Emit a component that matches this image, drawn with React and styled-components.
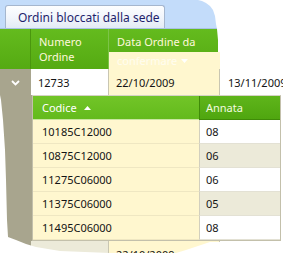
import React from "react";
import styled, { createGlobalStyle } from "styled-components";

const GlobalStyle = createGlobalStyle`
  html, body { margin: 0; padding: 0; background: #ffffff; }
  body { font-family: "Noto Sans", "Open Sans", sans-serif; }
`;

const Frame = styled.div`
  width: 297px;
  height: 264px;
  overflow: hidden;
  background: #ffffff;
`;

const Shot = styled.div`
  width: 297px;
  height: 264px;
  overflow: hidden;
  display: flex;
  flex-direction: column;
  background: #ffffff;
  clip-path: polygon(
    0px 0px, 198px 0px, 202px 1px, 206px 3px, 210px 6px, 213px 10px, 215px 16px,
    216px 24px, 217px 29px, 218px 40px, 218px 52px, 220px 52px, 220px 69px,
    283px 69px, 283px 95px, 282px 97px, 282px 192px, 287px 193px, 286px 216px,
    282px 217px, 282px 242px, 210px 242px, 198px 246px, 186px 250px, 176px 253px,
    110px 253px, 60px 251px, 36px 247px, 26px 244px, 16px 240px, 8px 237px,
    7px 220px, 6px 180px, 5px 150px, 3px 120px, 1px 100px, 0px 95px
  );
`;

const TabStrip = styled.div`
  height: 29px;
  flex: none;
  box-sizing: border-box;
  background: #c3dcfa;
  border-bottom: 1px solid #a8c2e3;
  padding: 5px 0 0 5px;
  display: flex;
  align-items: stretch;
`;

const Tab = styled.div`
  width: 160px;
  box-sizing: border-box;
  border: 1px solid #a5b6ce;
  border-bottom: none;
  border-radius: 3px 3px 0 0;
  background: linear-gradient(to bottom, #fdfeff 0%, #f1f5fb 55%, #e3ebf6 100%);
  padding-left: 12px;
  display: flex;
  align-items: center;
  font-size: 12px;
  color: #1e1f6c;
  white-space: nowrap;
`;

const HeaderRow = styled.div`
  height: 40px;
  flex: none;
  display: flex;
  background: linear-gradient(to bottom, #64bb1e, #55aa12);
`;

const HeadIndicator = styled.div`
  width: 31px;
  flex: none;
  box-sizing: border-box;
  border-right: 1px solid #4a960e;
`;

const HeadCell = styled.div`
  width: ${(p) => p.$w}px;
  flex: ${(p) => (p.$w ? "none" : "1")};
  box-sizing: border-box;
  padding: 5px 0 0 8px;
  font-size: 11px;
  line-height: 15px;
  color: #fff8dc;
  border-right: 1px solid #7cc448;
`;

const SortedHead = styled.div`
  width: 111px;
  flex: none;
  display: flex;
  flex-direction: column;
  font-size: 11px;
  color: #fff8dc;
  white-space: nowrap;
  overflow: hidden;
`;

const SortedTop = styled.div`
  height: 23px;
  box-sizing: border-box;
  padding: 5px 0 0 8px;
  line-height: 15px;
`;

const SortedBottom = styled.div`
  flex: 1;
  background: #fff7cf;
  color: #fffdf0;
  padding-left: 8px;
  line-height: 17px;
  display: flex;
  align-items: center;
  gap: 4px;
`;

const Row = styled.div`
  height: ${(p) => p.$h}px;
  flex: none;
  display: flex;
`;

const Indicator = styled.div`
  width: ${(p) => p.$w || 31}px;
  flex: none;
  background: #a8a58e;
  display: flex;
  align-items: center;
  justify-content: center;
`;

const Cell = styled.div`
  width: ${(p) => (p.$w ? `${p.$w}px` : "auto")};
  flex: ${(p) => (p.$w ? "none" : "1")};
  box-sizing: border-box;
  background: ${(p) => p.$bg || "#ffffff"};
  border-right: ${(p) => (p.$w ? "1px solid #c9c6b2" : "none")};
  padding-left: ${(p) => p.$pl || 7}px;
  display: flex;
  align-items: center;
  font-size: 11px;
  color: #141414;
  white-space: nowrap;
  overflow: hidden;
`;

const DetailWrap = styled.div`
  flex: none;
  display: flex;
`;

const DetailGrid = styled.div`
  width: 249px;
  box-sizing: border-box;
  border: 1px solid #c3c0ab;
  border-top-color: #d5d3c4;
  display: grid;
  grid-template-columns: 166px 1fr;
  grid-auto-rows: 24px;
  background: #ffffff;
`;

const DHead = styled.div`
  box-sizing: border-box;
  display: flex;
  align-items: center;
  gap: 7px;
  padding-left: ${(p) => p.$pl}px;
  font-size: 11px;
  color: ${(p) => (p.$sorted ? "#ffffff" : "#f3fbe0")};
  background: ${(p) =>
    p.$sorted
      ? "linear-gradient(to bottom, #72c528, #63ba1c)"
      : "linear-gradient(to bottom, #5fb51b, #4fa60f)"};
  border-bottom: 1px solid ${(p) => (p.$sorted ? "#c9e6a0" : "#3f8b08")};
  border-left: ${(p) => (p.$sorted ? "none" : "1px solid #3f8b08")};
`;

const DCell = styled.div`
  box-sizing: border-box;
  display: flex;
  align-items: center;
  padding-left: ${(p) => p.$pl}px;
  font-size: 11px;
  color: #141414;
  background: ${(p) => p.$bg};
  border-bottom: 1px solid ${(p) => p.$line};
  border-left: ${(p) => (p.$divider ? "1px solid #d2cfbe" : "none")};
`;

const Chevron = () => (
  <svg width="9" height="6" viewBox="0 0 9 6" style={{ marginTop: "1px" }}>
    <path d="M1 1 L4.5 4.5 L8 1" fill="none" stroke="#ffffff" strokeWidth="1.8" />
  </svg>
);

const ArrowUp = () => (
  <svg width="7" height="4" viewBox="0 0 7 4">
    <path d="M0 4 L3.5 0 L7 4 Z" fill="#ffffff" />
  </svg>
);

const ArrowDown = () => (
  <svg width="7" height="4" viewBox="0 0 7 4">
    <path d="M0 0 L3.5 4 L7 0 Z" fill="#ffffff" />
  </svg>
);

const details = [
  { codice: "10185C12000", annata: "08" },
  { codice: "10875C12000", annata: "06" },
  { codice: "11275C06000", annata: "06" },
  { codice: "11375C06000", annata: "05" },
  { codice: "11495C06000", annata: "08" },
];

export default function App() {
  return (
    <Frame>
      <GlobalStyle />
      <Shot>
        <TabStrip>
          <Tab>Ordini bloccati dalla sede</Tab>
        </TabStrip>
        <HeaderRow>
          <HeadIndicator />
          <HeadCell $w={78}>
            Numero
            <br />
            Ordine
          </HeadCell>
          <SortedHead>
            <SortedTop>Data Ordine da</SortedTop>
            <SortedBottom>
              confermare <ArrowDown />
            </SortedBottom>
          </SortedHead>
          <HeadCell>Data</HeadCell>
        </HeaderRow>
        <Row $h={26}>
          <Indicator>
            <Chevron />
          </Indicator>
          <Cell $w={78}>12733</Cell>
          <Cell $w={111} $bg="#fff7cf" $pl={7}>
            22/10/2009
          </Cell>
          <Cell $pl={8}>13/11/2009</Cell>
        </Row>
        <DetailWrap>
          <Indicator $w={32} />
          <DetailGrid>
            <DHead $sorted $pl={9}>
              Codice <ArrowUp />
            </DHead>
            <DHead $pl={6}>Annata</DHead>
            {details.map((d, i) => (
              <React.Fragment key={d.codice}>
                <DCell $pl={9} $bg="#fff7cf" $line="#efe7c2">
                  {d.codice}
                </DCell>
                <DCell
                  $pl={6}
                  $divider
                  $bg={i % 2 === 1 ? "#ecead9" : "#ffffff"}
                  $line="#e3e1d4"
                >
                  {d.annata}
                </DCell>
              </React.Fragment>
            ))}
          </DetailGrid>
        </DetailWrap>
        <Row $h={26}>
          <Indicator />
          <Cell $w={78} $bg="#ecead9" />
          <Cell $w={111} $bg="#fff7cf" $pl={7}>
            22/10/2009
          </Cell>
          <Cell />
        </Row>
      </Shot>
    </Frame>
  );
}
